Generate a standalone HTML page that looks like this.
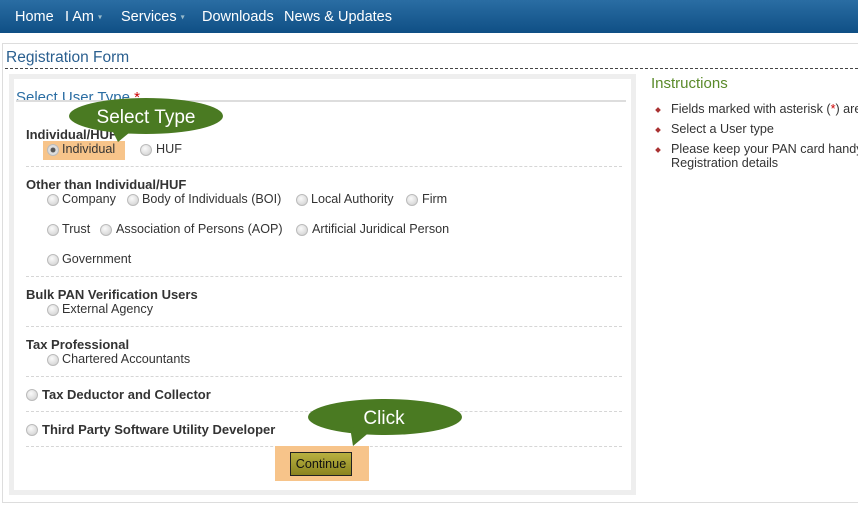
<!DOCTYPE html><html><head><style>
body{margin:0;width:858px;height:519px;background:#fff;font-family:"Liberation Sans",sans-serif;font-size:12.6px;color:#333;position:relative;overflow:hidden}
.a{position:absolute;white-space:nowrap}
.nav{position:absolute;left:0;top:0;width:858px;height:33px;background:linear-gradient(#2a6da3,#0f4f85)}
.nav>span{position:absolute;top:9px;color:#fff;font-size:14.5px;white-space:nowrap}
.car{font-size:8px;color:#9bc;vertical-align:middle}
.r{position:absolute;width:10px;height:10px;border-radius:50%;border:1px solid #bbb;background:radial-gradient(circle at 40% 35%,#fafafa,#ccc)}
.b{font-weight:bold;font-size:13px}
.sep{position:absolute;left:26px;width:596px;border-top:1px dashed #d6d6d6}
.li{position:absolute;left:656px;width:4px;height:4px;background:#a33;transform:rotate(45deg)}
</style></head><body>
<div class="nav"><span style="left:15px">Home</span><span style="left:65px">I Am <span class="car">▾</span></span><span style="left:121px">Services <span class="car">▾</span></span><span style="left:202px">Downloads</span><span style="left:284px">News &amp; Updates</span></div>
<div class="a" style="left:2px;top:43px;width:856px;height:458px;border:1px solid #ddd;border-right:none"></div>
<div class="a" style="left:6px;top:49px;font-size:15.5px;color:#2a5f8f">Registration Form</div>
<div class="a" style="left:5px;top:68px;width:853px;border-top:1px dashed #444"></div>
<div class="a" style="left:9px;top:74px;width:617px;height:411px;border:5px solid #eee;background:#fff"></div>
<div class="a" style="left:16px;top:89px;font-size:15px;color:#2a6da3">Select User Type <span style="color:#c00">*</span></div>
<div class="a" style="left:16px;top:100px;width:610px;border-top:2px solid #ddd"></div>
<div class="a b" style="left:26px;top:127px">Individual/HUF</div>
<div class="a" style="left:43px;top:141px;width:82px;height:19px;background:#f7c48a"></div>
<div class="r" style="left:47px;top:144px;background:radial-gradient(circle,#555 30%,#ddd 40%)"></div><div class="a" style="left:62px;top:142px">Individual</div>
<div class="r" style="left:140px;top:144px"></div><div class="a" style="left:156px;top:142px">HUF</div>
<div class="sep" style="top:166px"></div>
<div class="a b" style="left:26px;top:177px">Other than Individual/HUF</div>
<div class="r" style="left:47px;top:194px"></div><div class="a" style="left:62px;top:192px">Company</div>
<div class="r" style="left:127px;top:194px"></div><div class="a" style="left:142px;top:192px">Body of Individuals (BOI)</div>
<div class="r" style="left:296px;top:194px"></div><div class="a" style="left:311px;top:192px">Local Authority</div>
<div class="r" style="left:406px;top:194px"></div><div class="a" style="left:422px;top:192px">Firm</div>
<div class="r" style="left:47px;top:224px"></div><div class="a" style="left:62px;top:222px">Trust</div>
<div class="r" style="left:100px;top:224px"></div><div class="a" style="left:116px;top:222px">Association of Persons (AOP)</div>
<div class="r" style="left:296px;top:224px"></div><div class="a" style="left:312px;top:222px">Artificial Juridical Person</div>
<div class="r" style="left:47px;top:254px"></div><div class="a" style="left:62px;top:252px">Government</div>
<div class="sep" style="top:276px"></div>
<div class="a b" style="left:26px;top:287px">Bulk PAN Verification Users</div>
<div class="r" style="left:47px;top:304px"></div><div class="a" style="left:62px;top:302px">External Agency</div>
<div class="sep" style="top:326px"></div>
<div class="a b" style="left:26px;top:337px">Tax Professional</div>
<div class="r" style="left:47px;top:354px"></div><div class="a" style="left:62px;top:352px">Chartered Accountants</div>
<div class="sep" style="top:376px"></div>
<div class="r" style="left:26px;top:389px"></div><div class="a b" style="left:42px;top:387px">Tax Deductor and Collector</div>
<div class="sep" style="top:411px"></div>
<div class="r" style="left:26px;top:424px"></div><div class="a b" style="left:42px;top:422px">Third Party Software Utility Developer</div>
<div class="sep" style="top:446px"></div>
<div class="a" style="left:275px;top:446px;width:94px;height:35px;background:#f7c48a"></div>
<div class="a" style="left:290px;top:452px;width:60px;height:22px;border:1px solid #222;background:linear-gradient(#b8b040,#8a8420);color:#111;text-align:center;line-height:22px">Continue</div>
<svg class="a" style="left:0;top:0" width="858" height="519">
<ellipse cx="146" cy="116" rx="77" ry="18" fill="#4a7a22"/><path d="M110 126 L118 142 L135 128Z" fill="#4a7a22"/>
<ellipse cx="385" cy="417" rx="77" ry="18" fill="#4a7a22"/><path d="M350 427 L353 446 L372 430Z" fill="#4a7a22"/>
<text x="146" y="123" fill="#fff" font-size="19" text-anchor="middle" font-family="Liberation Sans">Select Type</text>
<text x="384" y="424" fill="#fff" font-size="19" text-anchor="middle" font-family="Liberation Sans">Click</text>
</svg>
<div class="a" style="left:651px;top:75px;font-size:15px;color:#5a8a2a">Instructions</div>
<div class="li" style="top:108px"></div><div class="a" style="left:671px;top:102px">Fields marked with asterisk (<span style="color:#c00">*</span>) are</div>
<div class="li" style="top:128px"></div><div class="a" style="left:671px;top:122px">Select a User type</div>
<div class="li" style="top:148px"></div><div class="a" style="left:671px;top:142px">Please keep your PAN card handy<br>Registration details</div>
</body></html>
